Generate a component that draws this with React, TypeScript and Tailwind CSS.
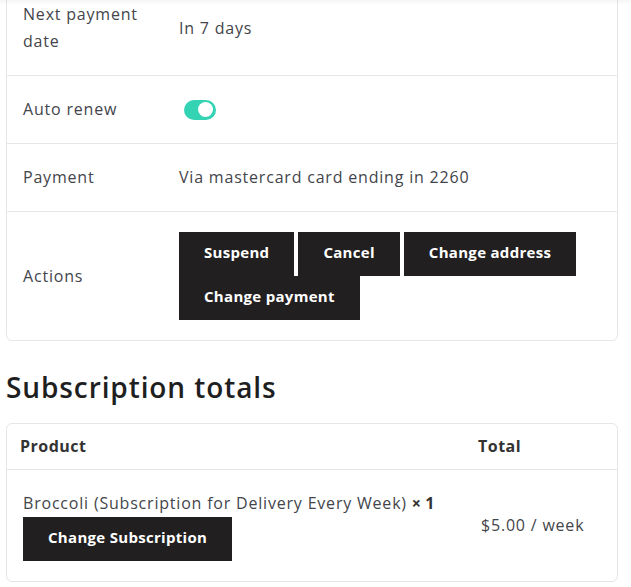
import React, { useState } from 'react';

// WooCommerce-style subscription details, page scrolled part way down
const ACTIONS = ['Suspend', 'Cancel', 'Change address', 'Change payment'];

const Row: React.FC<{ label: React.ReactNode; children: React.ReactNode; last?: boolean }> = ({ label, children, last }) => (
  <div className={`flex items-center ${last ? '' : 'border-b border-[#e6e6e6]'}`}>
    <div className="w-[172px] shrink-0 pl-4 pr-4 py-5 self-center">{label}</div>
    <div className="flex-1 pr-4 py-5">{children}</div>
  </div>
);

const Toggle: React.FC = () => {
  const [on, setOn] = useState(true);
  return (
    <button
      onClick={() => setOn(!on)}
      className={`ml-[5px] flex h-[20px] w-[32px] items-center rounded-full px-[3px] ${on ? 'justify-end bg-[#33d3b3]' : 'justify-start bg-[#cfcfcf]'}`}
    >
      <span className="block h-[15px] w-[15px] rounded-full bg-white" />
    </button>
  );
};

const DarkButton: React.FC<{ children: React.ReactNode; className?: string }> = ({ children, className = '' }) => (
  <button className={`h-[44px] bg-[#221f20] px-[25px] pb-[3px] text-[15px] font-bold tracking-[0.3px] text-white ${className}`}>{children}</button>
);

export default function App() {
  return (
    <div className="relative min-h-screen overflow-hidden bg-white text-[16px] leading-[27px] tracking-[0.8px] text-[#43454b]" style={{ fontFamily: '"Open Sans", "Liberation Sans", sans-serif' }}>
      {/* faint shadow from the header above */}
      <div className="pointer-events-none fixed inset-x-0 top-0 h-[5px] bg-gradient-to-b from-black/[0.04] to-transparent" />

      <div className="-mt-[20px] pl-[6px] pr-[13px]">
        <div className="rounded-b-[6px] border border-[#e6e6e6]">
          <Row label={<>Next payment<br />date</>}>In 7 days</Row>
          <Row label="Auto renew">
            <Toggle />
          </Row>
          <Row label="Payment">Via mastercard card ending in 2260</Row>
          <Row label="Actions" last>
            <div className="flex flex-wrap gap-x-[4px]">
              {ACTIONS.map((a) => (
                <DarkButton key={a}>{a}</DarkButton>
              ))}
            </div>
          </Row>
        </div>

        <h2 className="mt-[26px] text-[28px] font-semibold leading-[40px] tracking-[0.9px] text-[#1f1f1f]">Subscription totals</h2>

        <div className="mt-[16px] rounded-[6px] border border-[#e6e6e6]">
          <div className="flex border-b border-[#e6e6e6] tracking-[0.5px] text-[#333]">
            <div className="flex-1 pl-[13px] py-[9px] font-bold">Product</div>
            <div className="w-[139px] py-[9px] font-bold">Total</div>
          </div>
          <div className="flex items-center">
            <div className="flex-1 pl-4 py-5">
              <div>
                Broccoli (Subscription for Delivery Every Week) <strong className="tracking-normal text-[#333]">× 1</strong>
              </div>
              <DarkButton className="px-[25px]">Change Subscription</DarkButton>
            </div>
            <div className="w-[136px]">$5.00 / week</div>
          </div>
        </div>
      </div>
    </div>
  );
}
